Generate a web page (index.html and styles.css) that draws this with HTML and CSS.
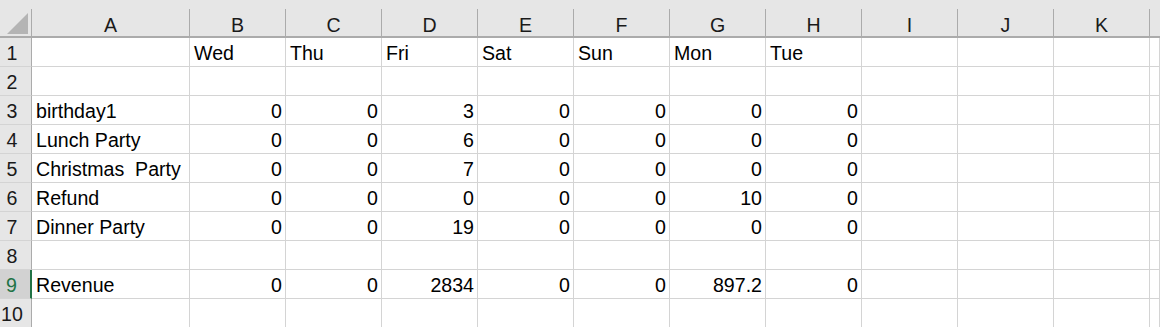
FILE: index.html
```html
<!DOCTYPE html>
<html lang="en">
<head>
<meta charset="utf-8">
<title>Sheet</title>
<link rel="stylesheet" href="styles.css">
</head>
<body>
<div class="sheet">
  <div class="hd corner"><span class="lbl"><svg class="tri" width="22" height="22" viewBox="0 0 22 22"><polygon points="21,0 21,21 0,21" fill="#b4b4b4"/></svg></span></div>
  <div class="hd"><span class="lbl">A</span></div>
  <div class="hd"><span class="lbl">B</span></div>
  <div class="hd"><span class="lbl">C</span></div>
  <div class="hd"><span class="lbl">D</span></div>
  <div class="hd"><span class="lbl">E</span></div>
  <div class="hd"><span class="lbl">F</span></div>
  <div class="hd"><span class="lbl">G</span></div>
  <div class="hd"><span class="lbl">H</span></div>
  <div class="hd"><span class="lbl">I</span></div>
  <div class="hd"><span class="lbl">J</span></div>
  <div class="hd"><span class="lbl">K</span></div>
  <div class="hd last"><span class="lbl"></span></div>

  <div class="rh">1</div><div class="c"></div><div class="c">Wed</div><div class="c">Thu</div><div class="c">Fri</div><div class="c">Sat</div><div class="c">Sun</div><div class="c">Mon</div><div class="c">Tue</div><div class="c"></div><div class="c"></div><div class="c"></div><div class="c"></div>

  <div class="rh">2</div><div class="c"></div><div class="c"></div><div class="c"></div><div class="c"></div><div class="c"></div><div class="c"></div><div class="c"></div><div class="c"></div><div class="c"></div><div class="c"></div><div class="c"></div><div class="c"></div>

  <div class="rh">3</div><div class="c">birthday1</div><div class="c n">0</div><div class="c n">0</div><div class="c n">3</div><div class="c n">0</div><div class="c n">0</div><div class="c n">0</div><div class="c n">0</div><div class="c"></div><div class="c"></div><div class="c"></div><div class="c"></div>

  <div class="rh">4</div><div class="c">Lunch Party</div><div class="c n">0</div><div class="c n">0</div><div class="c n">6</div><div class="c n">0</div><div class="c n">0</div><div class="c n">0</div><div class="c n">0</div><div class="c"></div><div class="c"></div><div class="c"></div><div class="c"></div>

  <div class="rh">5</div><div class="c">Christmas  Party</div><div class="c n">0</div><div class="c n">0</div><div class="c n">7</div><div class="c n">0</div><div class="c n">0</div><div class="c n">0</div><div class="c n">0</div><div class="c"></div><div class="c"></div><div class="c"></div><div class="c"></div>

  <div class="rh">6</div><div class="c">Refund</div><div class="c n">0</div><div class="c n">0</div><div class="c n">0</div><div class="c n">0</div><div class="c n">0</div><div class="c n">10</div><div class="c n">0</div><div class="c"></div><div class="c"></div><div class="c"></div><div class="c"></div>

  <div class="rh">7</div><div class="c">Dinner Party</div><div class="c n">0</div><div class="c n">0</div><div class="c n">19</div><div class="c n">0</div><div class="c n">0</div><div class="c n">0</div><div class="c n">0</div><div class="c"></div><div class="c"></div><div class="c"></div><div class="c"></div>

  <div class="rh">8</div><div class="c"></div><div class="c"></div><div class="c"></div><div class="c"></div><div class="c"></div><div class="c"></div><div class="c"></div><div class="c"></div><div class="c"></div><div class="c"></div><div class="c"></div><div class="c"></div>

  <div class="rh sel">9</div><div class="c">Revenue</div><div class="c n">0</div><div class="c n">0</div><div class="c n">2834</div><div class="c n">0</div><div class="c n">0</div><div class="c n">897.2</div><div class="c n">0</div><div class="c"></div><div class="c"></div><div class="c"></div><div class="c"></div>

  <div class="rh">10</div><div class="c"></div><div class="c"></div><div class="c"></div><div class="c"></div><div class="c"></div><div class="c"></div><div class="c"></div><div class="c"></div><div class="c"></div><div class="c"></div><div class="c"></div><div class="c"></div>
</div>
</body>
</html>
```

FILE: styles.css
```css
* { box-sizing: border-box; }
html, body { margin: 0; padding: 0; background: #ffffff; overflow: hidden; }
body {
  font-family: "Liberation Sans", Arial, sans-serif;
  font-size: 19.6px;
  line-height: 20px;
  color: #000;
}
.sheet {
  display: grid;
  grid-template-columns: 32px 158px repeat(10, 96px) 1fr;
  grid-auto-rows: 29px;
  grid-template-rows: 38px;
  width: 1160px;
}
.hd {
  background: #e6e6e6;
  padding-top: 9px;
  border-bottom: 2px solid #ababab;
  color: #1a1a1a;
}
.hd .lbl {
  display: flex;
  align-items: flex-end;
  justify-content: center;
  height: 27px;
  padding-bottom: 1px;
  border-right: 1px solid #ababab;
}
.hd.last .lbl { border-right: none; }
.corner .lbl {
  align-items: flex-start;
  justify-content: flex-start;
  padding: 4px 0 0 7px;
}
.tri { display: block; }
.rh {
  background: #e6e6e6;
  border-right: 1px solid #ababab;
  border-bottom: 1px solid #d4d4d4;
  display: flex;
  align-items: flex-end;
  justify-content: center;
  padding: 0 7px 3px 0;
  color: #1a1a1a;
}
.rh.sel {
  background: #d2d2d2;
  color: #217346;
  border-right: 2px solid #217346;
}
.c {
  border-right: 1px solid #d4d4d4;
  border-bottom: 1px solid #d4d4d4;
  display: flex;
  align-items: flex-end;
  padding: 0 3px 3px 4px;
  white-space: pre;
  overflow: visible;
}
.c.n { justify-content: flex-end; }
```
